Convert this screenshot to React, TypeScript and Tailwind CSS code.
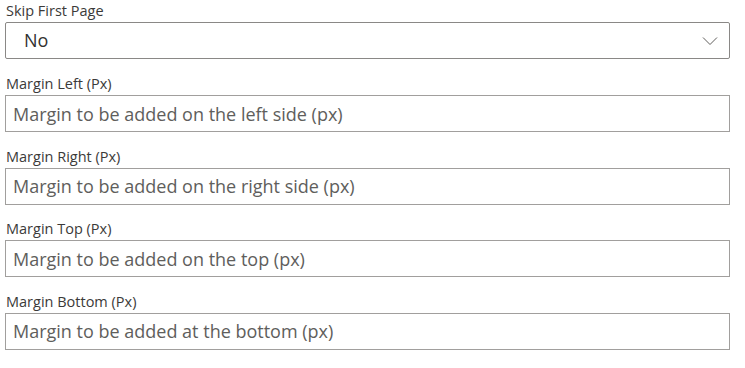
import React from "react";

const fields = [
  { label: "Margin Left (Px)", ph: "Margin to be added on the left side (px)" },
  { label: "Margin Right (Px)", ph: "Margin to be added on the right side (px)" },
  { label: "Margin Top (Px)", ph: "Margin to be added on the top (px)" },
  { label: "Margin Bottom (Px)", ph: "Margin to be added at the bottom (px)" },
];

const font = { fontFamily: '"Open Sans", "Noto Sans", sans-serif' };

export default function App() {
  return (
    <div className="w-[745px] h-[368px] bg-white pl-[5px] pr-[15px]" style={font}>
      <div className="flex flex-col">
        <div className="h-[22px] pt-[1px] text-[14.5px] leading-[20px] text-[#3b3a39] pl-[1px]">Skip First Page</div>
        <div className="h-[37px] border border-[#8a8886] rounded-[2px] flex items-center justify-between pl-[18px] pr-[11px]">
          <span className="text-[18px] text-[#323130]">No</span>
          <svg width="16" height="10" viewBox="0 0 16 10" fill="none">
            <path d="M1 1.5 L8 8.5 L15 1.5" stroke="#605e5c" strokeWidth="1" />
          </svg>
        </div>
        {fields.map((f, i) => (
          <div key={f.label} className={(i === 0 ? "mt-[14px]" : "mt-[13.67px]") + " flex flex-col"}>
            <div className="h-[22px] pt-[1px] text-[14.5px] leading-[20px] text-[#3b3a39] pl-[1px]">{f.label}</div>
            <input
              className="h-[37px] border border-[#a19f9d] px-[7px] text-[18px] text-[#323130] placeholder:text-[#605e5c] outline-none bg-white"
              placeholder={f.ph}
              style={font}
            />
          </div>
        ))}
      </div>
    </div>
  );
}
